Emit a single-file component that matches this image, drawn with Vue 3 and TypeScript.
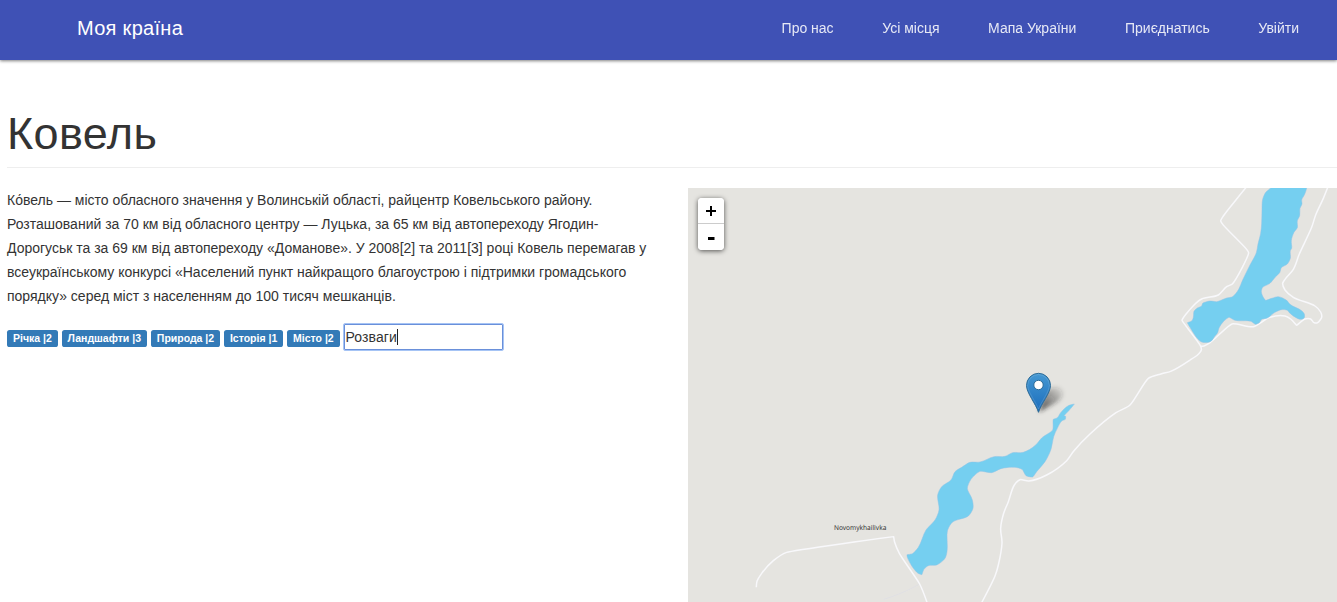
<script setup lang="ts">
import { onMounted, ref } from 'vue'

type Point = [number, number]

const links: string[] = ['Про нас', 'Усі місця', 'Мапа України', 'Приєднатись', 'Увійти']
const tags = [
  { name: 'Річка', count: 2 },
  { name: 'Ландшафти', count: 3 },
  { name: 'Природа', count: 2 },
  { name: 'Історія', count: 1 },
  { name: 'Місто', count: 2 },
]

const newTag = ref('Розваги')
const field = ref<HTMLInputElement | null>(null)
onMounted(() => field.value?.focus())

// Smooth path through the points; sharp turns keep their corners.
function curve(source: string, closed = false): string {
  const pts: Point[] = source.split(' ').map((p) => p.split(',').map(Number) as Point)
  const n = pts.length
  const at = (i: number): Point => (closed ? pts[(i + n) % n] : pts[Math.max(0, Math.min(n - 1, i))])
  const unit = (a: Point, b: Point): Point => {
    const length = Math.hypot(b[0] - a[0], b[1] - a[1]) || 1
    return [(b[0] - a[0]) / length, (b[1] - a[1]) / length]
  }
  const tangents = pts.map((_, i): Point => {
    const u = unit(at(i - 1), at(i))
    const v = unit(at(i), at(i + 1))
    const bend = Math.max(0, u[0] * v[0] + u[1] * v[1]) * 0.17
    return [(u[0] + v[0]) * bend, (u[1] + v[1]) * bend]
  })
  let d = `M${pts[0][0]} ${pts[0][1]}`
  for (let i = 0; i < (closed ? n : n - 1); i++) {
    const b = at(i)
    const c = at(i + 1)
    const s = tangents[i]
    const t = tangents[(i + 1) % n]
    const length = Math.min(60, Math.hypot(c[0] - b[0], c[1] - b[1]))
    d += `C${b[0] + s[0] * length} ${b[1] + s[1] * length} ${c[0] - t[0] * length} ${c[1] - t[1] * length} ${c[0]} ${c[1]}`
  }
  return closed ? d + 'Z' : d
}

const northLake = curve('300,-10 302,24 288,36 278,58 276,90 275,130 272,160 264,192 259,218 240,255 218,300 206,328 196,342 186,351 170,354 150,362 140,365 120,363 98,370 95,378 82,384 72,394 70,412 66,422 52,428 60,442 84,478 95,486 115,487 125,482 135,468 143,458 147,444 160,425 177,412 195,421 243,424 256,433 268,428 275,418 292,414 315,397 335,389 352,391 358,398 384,416 394,418 403,413 403,402 396,393 360,373 350,361 325,350 305,355 287,361 280,352 274,335 278,322 300,310 316,291 329,278 334,263 352,252 361,235 361,212 365,205 364,182 372,157 382,143 382,122 389,107 390,85 396,72 395,60 404,43 410,24 415,-10', true)
const southLake = curve('553,-108 535,-103 512,-82 502,-67 490,-62 488,-30 455,-6 436,16 400,37 368,38 345,49 312,50 270,66 240,67 215,82 195,95 183,120 155,140 143,165 147,210 135,240 108,270 85,322 67,341 51,344 52,352 84,400 96,404 102,388 115,377 140,375 165,355 171,335 173,270 188,246 235,228 249,205 247,180 232,145 243,118 270,94 305,98 333,86 375,82 396,88 408,107 428,111 440,95 465,65 483,28 491,-10 502,-35 515,-57 526,-62 527,-71 522,-73 540,-92', true)

const northRoads = [
  curve('230,20 200,57 160,108 152,122 156,130 230,208 236,218 187,312 170,320 145,345 95,357 70,377 36,421 92,499 94,510 85,523 60,540'),
  curve('92,499 102,498 120,488 186,432 250,440 300,412 345,408 362,417 380,436 405,417 422,417 432,428 443,428 455,412 452,396 435,378 370,352 345,330 338,310 345,298 370,268 388,222 425,142 437,105 460,55 474,20'),
]
const southRoads = [
  curve('900,-240 842,-206 815,-199 775,-185 720,-105 678,-82 600,-18 552,32 530,62 470,105 417,123 390,119 373,135 355,185 341,220 332,265 336,308 325,375 315,408 274,490'),
  curve('-401,442 -399,424 -385,400 -350,362 -310,337 11,290 14,307 28,340 89,432 112,490'),
]
const track = curve('89,432 50,452 0,472 -20,478')
</script>

<template>
  <div class="page">
    <header class="bar">
      <span class="brand">Моя країна</span>
      <nav class="nav">
        <a v-for="link in links" :key="link" class="nav-link">{{ link }}</a>
      </nav>
    </header>

    <main class="content">
      <h1 class="title">Ковель</h1>
      <div class="columns">
        <section class="about">
          <p class="text">Ко́вель — місто обласного значення у Волинській області, райцентр Ковельського району. Розташований за 70 км від обласного центру — Луцька, за 65 км від автопереходу Ягодин-Дорогуськ та за 69 км від автопереходу «Доманове». У 2008[2] та 2011[3] році Ковель перемагав у всеукраїнському конкурсі «Населений пункт найкращого благоустрою і підтримки громадського порядку» серед міст з населенням до 100 тисяч мешканців.</p>
          <div class="tags">
            <span v-for="tag in tags" :key="tag.name" class="tag">{{ tag.name }} |{{ tag.count }}</span>
            <div class="field">
              <input ref="field" v-model="newTag" class="field-input" type="text" />
              <span class="caret"></span>
            </div>
          </div>
        </section>

        <section class="map">
          <svg class="map-canvas" width="649" height="414" viewBox="0 0 649 414">
            <defs>
              <linearGradient id="pin-fill" x1="0" y1="0" x2="0" y2="1">
                <stop offset="0" stop-color="#4598d2" />
                <stop offset="1" stop-color="#1a6cbc" />
              </linearGradient>
              <linearGradient id="shade-fill" x1="0" y1="1" x2="1" y2="0">
                <stop offset="0" stop-color="#222" stop-opacity=".8" />
                <stop offset="1" stop-color="#222" stop-opacity=".04" />
              </linearGradient>
              <filter id="soft" x="-30%" y="-30%" width="160%" height="160%">
                <feGaussianBlur stdDeviation="2" />
              </filter>
            </defs>
            <g transform="translate(482 -8) scale(.33333)">
              <path v-for="(d, i) in northRoads" :key="i" class="road" :d="d" />
              <path class="water" :d="northLake" />
            </g>
            <g transform="translate(202 252) scale(.33333)">
              <path class="track" :d="track" />
              <path v-for="(d, i) in southRoads" :key="i" class="road" :d="d" />
              <path class="water" :d="southLake" />
            </g>
            <text class="place" x="146" y="342" textLength="52.300" lengthAdjust="spacingAndGlyphs">Novomykhailivka</text>
            <path d="M351 224L356 207Q361 197 372 200Q379 206 369 214Z" fill="url(#shade-fill)" filter="url(#soft)" />
            <path d="M350.500 224.300C348 216 338.500 205 338.500 197.500A12 12.200 0 0 1 362.500 197.500C362.500 205 353 216 350.500 224.300Z" fill="url(#pin-fill)" stroke="#2e6c97" />
            <path d="M350.500 221C348 214 339.700 204 339.700 197.500A10.800 11 0 0 1 361.300 197.500C361.300 204 353 214 350.500 221Z" fill="none" stroke="#fff" stroke-opacity=".13" />
            <circle cx="350.500" cy="197" r="4.700" fill="#fff" stroke="#2e6c97" />
          </svg>
          <div class="zoom">
            <button class="zoom-button" type="button" aria-label="Zoom in">
              <svg width="12" height="12" viewBox="0 0 12 12"><path d="M1 6h10M6 1v10" stroke="#000" stroke-width="2" /></svg>
            </button>
            <button class="zoom-button" type="button" aria-label="Zoom out">
              <svg width="12" height="12" viewBox="0 0 12 12"><path d="M3 7.500h6.500" stroke="#000" stroke-width="3" /></svg>
            </button>
          </div>
        </section>
      </div>
    </main>
  </div>
</template>

<style>
html,
body {
  margin: 0;
  overflow: hidden;
  background: #fff;
}
</style>

<style scoped>
.page {
  box-sizing: border-box;
  width: 100%;
  height: 602px;
  overflow: hidden;
  color: #333;
  font-family: "Liberation Sans", Arial, sans-serif;
  font-size: 14px;
}
.bar {
  box-sizing: border-box;
  display: flex;
  align-items: center;
  justify-content: space-between;
  height: 60px;
  padding: 0 38px 4px 77px;
  background: #3f51b5;
  color: #fff;
  box-shadow: 0 1px 3px rgba(0, 0, 0, 0.5);
}
.brand {
  font-size: 20px;
  letter-spacing: 0.3px;
}
.nav {
  display: flex;
  gap: 48.600px;
}
.nav-link {
  opacity: 0.87;
}
.content {
  padding-left: 7px;
}
.title {
  box-sizing: border-box;
  height: 108px;
  margin: 0;
  padding-top: 47px;
  border-bottom: 1px solid #eee;
  font-size: 45px;
  font-weight: 400;
  letter-spacing: 0.4px;
  line-height: 54px;
}
.columns {
  display: flex;
  justify-content: space-between;
  padding-top: 20px;
}
.about {
  width: 650px;
}
.text {
  margin: 0;
  line-height: 24px;
}
.tags {
  display: flex;
  align-items: center;
  gap: 3.800px;
  margin-top: 15px;
}
.tag {
  height: 17px;
  margin-top: 2px;
  padding: 0 6px;
  border-radius: 2.600px;
  background: #337ab7;
  color: #fff;
  font-size: 10.500px;
  font-weight: 700;
  line-height: 17px;
  white-space: nowrap;
}
.field {
  position: relative;
  width: 161px;
  height: 28px;
}
.field-input {
  box-sizing: border-box;
  width: 100%;
  height: 100%;
  padding: 0 1px;
  border: 1px solid #a6c4f5;
  border-radius: 2px;
  outline: none;
  box-shadow: inset 0 0 0 1px #6a90da;
  color: #333;
  caret-color: transparent;
  font: 14px "Liberation Sans", Arial, sans-serif;
  letter-spacing: 0.100px;
}
.caret {
  position: absolute;
  top: 6px;
  left: 54px;
  width: 1px;
  height: 16px;
  background: #222;
}
.map {
  position: relative;
  width: 649px;
  height: 414px;
  background: #e5e4e0;
}
.map-canvas {
  display: block;
}
.road {
  fill: none;
  stroke: #f8f8fb;
  stroke-width: 4.500;
  stroke-linejoin: round;
}
.track {
  fill: none;
  stroke: #e0e0e4;
  stroke-width: 3;
}
.water {
  fill: #75cff0;
  stroke: #8fc3e6;
  stroke-width: 1.500;
}
.place {
  fill: #333;
  font-family: "Noto Sans", sans-serif;
  font-size: 6.800px;
  text-rendering: geometricPrecision;
}
.zoom {
  position: absolute;
  top: 10px;
  left: 10px;
  width: 26px;
  overflow: hidden;
  border-radius: 4px;
  background: #fff;
  box-shadow: 0 1px 5px rgba(0, 0, 0, 0.65);
}
.zoom-button {
  display: flex;
  align-items: center;
  justify-content: center;
  width: 26px;
  height: 26px;
  padding: 0;
  border: 0;
  background: #fff;
}
.zoom-button:first-child {
  border-bottom: 1px solid #ccc;
}
</style>
